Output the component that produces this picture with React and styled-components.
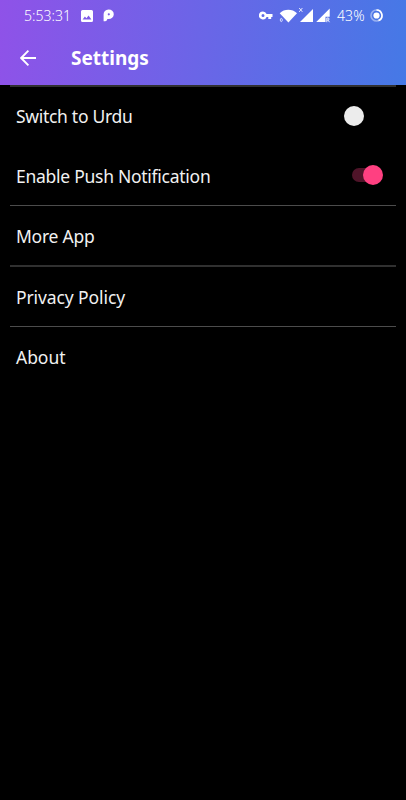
import React from 'react'
import styled, { createGlobalStyle } from 'styled-components'

const GlobalStyle = createGlobalStyle`
  * {
    box-sizing: border-box;
  }

  body {
    margin: 0;
    background: #000;
    font-family: 'Noto Sans', 'Open Sans', sans-serif;
  }
`

const Screen = styled.div`
  width: 406px;
  height: 800px;
  overflow: hidden;
  background: #000;
  color: #f1f1f1;
`

const Header = styled.header`
  height: 85px;
  background: linear-gradient(96deg, #8f52e8, #4579e6);
  color: #fff;
`

const StatusBar = styled.div`
  display: flex;
  align-items: center;
  height: 31px;
  padding-left: 24px;

  svg {
    display: block;
    flex: none;
  }
`

const StatusText = styled.span`
  width: ${props => props.$width}px;
  flex: none;
  padding-bottom: 1px;
  font-size: 14px;
  line-height: 29px;
  font-weight: 300;
  letter-spacing: ${props => props.$spacing}px;
  white-space: nowrap;
`

const BatteryText = styled(StatusText)`
  margin-left: 6px;
`

const StatusIcons = styled.div`
  display: flex;
  align-items: center;
  gap: 10px;
  margin-left: 10px;
`

const SystemIcons = styled.div`
  display: flex;
  align-items: center;
  margin-left: 144px;
`

const TitleBar = styled.div`
  display: flex;
  align-items: center;
  height: 54px;
  padding-left: 20px;

  svg {
    display: block;
  }
`

const Title = styled.h1`
  margin: 0 0 0 35px;
  font-size: 19px;
  line-height: 54px;
  font-weight: 700;
`

const Group = styled.div`
  margin: 0 10px;
  border-top: ${props => (props.$soft ? '2px solid #303030' : '1px solid #4c4c4c')};
`

const Row = styled.div`
  display: flex;
  align-items: center;
  justify-content: space-between;
  height: ${props => props.$height || 59}px;
  padding: 0 13px 0 6px;
`

const Label = styled.span`
  padding-top: ${props => props.$drop || 0}px;
  font-size: 17.5px;
  line-height: 30px;
  letter-spacing: ${props => props.$spacing || -0.25}px;
  white-space: nowrap;
`

const Switch = styled.div`
  display: flex;
  align-items: center;
  justify-content: ${props => (props.$on ? 'flex-end' : 'flex-start')};
  width: ${props => (props.$on ? 31 : 39)}px;
  height: 20px;
`

const Track = styled.div`
  width: 25px;
  height: 14px;
  margin-right: -14px;
  border-radius: 7px;
  background: #4f1429;
`

const Thumb = styled.div`
  z-index: 1;
  width: 20px;
  height: 20px;
  flex: none;
  border-radius: 50%;
  background: ${props => (props.$on ? '#ff4081' : '#ececec')};
`

const ImageIcon = () => (
  <svg width="12" height="12" viewBox="0 0 12 12">
    <path
      fill="#fff"
      fillRule="evenodd"
      d="M1.5 0h9A1.5 1.5 0 0 1 12 1.5v9a1.5 1.5 0 0 1-1.5 1.5h-9A1.5 1.5 0 0 1 0 10.5v-9A1.5 1.5 0 0 1 1.5 0zM1.6 9.5h8.8L7.6 5.4 5.4 8.2 3.9 6.5z"
    />
  </svg>
)

const ParkingIcon = () => (
  <svg width="12" height="13" viewBox="0 0 12 13">
    <path
      fill="#fff"
      fillRule="evenodd"
      d="M.6 12.2V5.6A5.1 4.8 0 1 1 5.4 10L4.3 9.900C4.200 11.300 3.300 12.200 .6 12.200zM5.800 4.200A1.100 1.100 0 1 0 5.800 6.400A1.100 1.100 0 0 0 5.800 4.200z"
    />
  </svg>
)

const KeyIcon = () => (
  <svg width="14" height="9" viewBox="0 0 14 9">
    <path
      fill="#fff"
      fillRule="evenodd"
      d="M4 .5A4 4 0 0 1 7.6 3H13.5V6H12.2V8H9.3V6H7.6A4 4 0 1 1 4 .5zM4 3a1.5 1.5 0 1 0 0 3 1.5 1.5 0 0 0 0-3z"
    />
  </svg>
)

const WifiIcon = styled(({ className }) => (
  <svg className={className} width="19" height="14" viewBox="0 0 19 14">
    <path d="M.7 4.2C5.3-.3 13.3-.3 18 4.2L9.4 13.5z" fill="#fff" />
    <ellipse cx="2.3" cy="11" rx="1" ry="1.6" fill="none" stroke="#dfe4ff" strokeWidth=".9" />
  </svg>
))`
  margin-left: 6px;
`

const SignalNoneIcon = styled(({ className }) => (
  <svg className={className} width="16" height="16" viewBox="0 0 16 16">
    <path d="M15 2V15H2z" fill="#fff" />
    <path d="M1.2 1L4.4 4.9M4.4 1L1.2 4.9" stroke="#e5e8ff" strokeWidth="1" />
  </svg>
))`
  margin-top: -2px;
`

const SignalRoamingIcon = styled(({ className }) => (
  <svg className={className} width="16" height="16" viewBox="0 0 16 16">
    <path d="M14.7 1.5V9.700H10.500V15H1.200z" fill="#fff" />
    <path d="M11.800 15.200V11H13A1 1 0 0 1 13 13.100H11.800M13 13.100L14.500 15.200" fill="none" stroke="#fff" strokeWidth=".9" />
  </svg>
))`
  margin-left: 1px;
  margin-top: -2px;
`

const BatteryIcon = styled(({ className }) => (
  <svg className={className} width="13" height="13" viewBox="0 0 13 13">
    <circle cx="6.5" cy="6.5" r="5.5" fill="none" stroke="#fff" strokeOpacity=".42" strokeWidth="1.6" />
    <path d="M6.5 1A5.5 5.5 0 0 1 8.5 11.6" fill="none" stroke="#fff" strokeWidth="1.6" />
    <circle cx="6.5" cy="6.5" r="3.1" fill="#fff" />
  </svg>
))`
  margin-left: 3px;
`

const BackIcon = () => (
  <svg width="16" height="16" viewBox="0 0 16 16">
    <path d="M16 8H1.5M8.4 .7L1.2 8L8.4 15.3" fill="none" stroke="#fff" strokeWidth="1.9" />
  </svg>
)

const Toggle = ({ on }) => (
  <Switch $on={on}>
    {on && <Track />}
    <Thumb $on={on} />
  </Switch>
)

const App = () => (
  <>
    <GlobalStyle />
    <Screen>
      <Header>
        <StatusBar>
          <StatusText $width={47} $spacing={0.05}>5:53:31</StatusText>
          <StatusIcons>
            <ImageIcon />
            <ParkingIcon />
          </StatusIcons>
          <SystemIcons>
            <KeyIcon />
            <WifiIcon />
            <SignalNoneIcon />
            <SignalRoamingIcon />
          </SystemIcons>
          <BatteryText $width={30} $spacing={0.1}>43%</BatteryText>
          <BatteryIcon />
        </StatusBar>
        <TitleBar>
          <BackIcon />
          <Title>Settings</Title>
        </TitleBar>
      </Header>
      <Group $soft>
        <Row $height={58}>
          <Label $spacing={-0.3}>Switch to Urdu</Label>
          <Toggle />
        </Row>
        <Row $height={60}>
          <Label $spacing={-0.27} $drop={1}>Enable Push Notification</Label>
          <Toggle on />
        </Row>
      </Group>
      <Group>
        <Row>
          <Label>More App</Label>
        </Row>
      </Group>
      <Group $soft>
        <Row>
          <Label $spacing={-0.1}>Privacy Policy</Label>
        </Row>
      </Group>
      <Group>
        <Row $height={60}>
          <Label $spacing={-0.05}>About</Label>
        </Row>
      </Group>
    </Screen>
  </>
)

export default App
